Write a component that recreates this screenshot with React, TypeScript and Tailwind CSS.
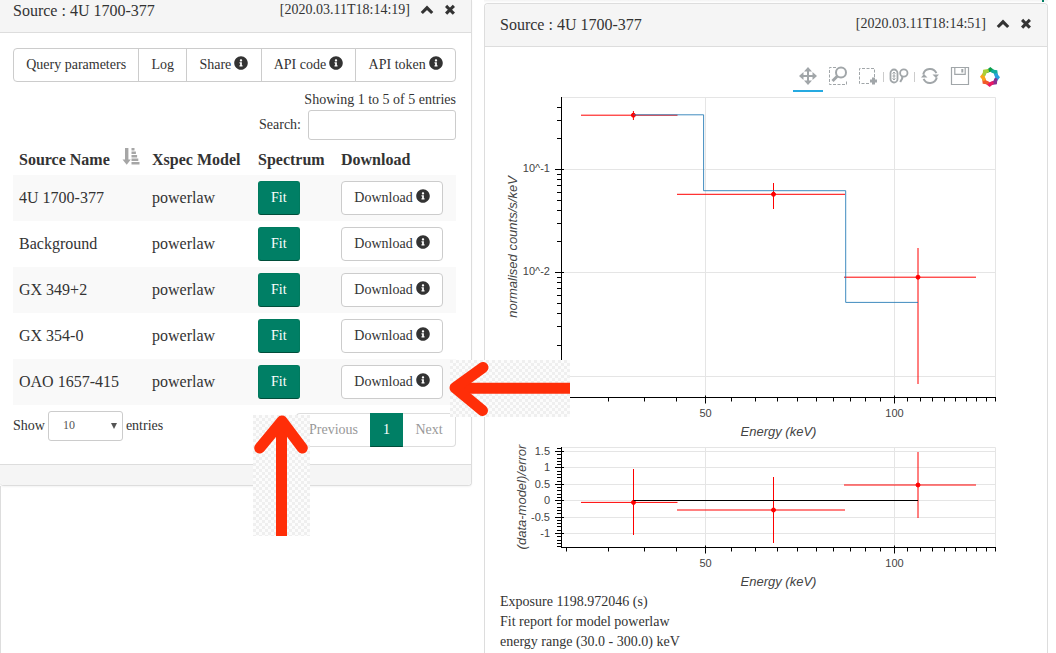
import React from 'react';
import { FaInfoCircle } from 'react-icons/fa';

const serif = "font-['Liberation_Serif',serif]";

function ChevronUp() {
  return (
    <svg className="h-3.5 w-3.5" viewBox="0 0 14 14" aria-hidden="true">
      <path d="M1.8 10 L7 4.8 L12.2 10" fill="none" stroke="#333" strokeWidth="3.1" />
    </svg>
  );
}

function Cross() {
  return (
    <svg className="h-3.5 w-3.5" viewBox="0 0 14 14" aria-hidden="true">
      <path d="M4.2 4 L9.8 9.6 M9.8 4 L4.2 9.6" fill="none" stroke="#333" strokeWidth="3.1" strokeLinecap="square" />
    </svg>
  );
}

function PanelHeader({ time, className }: { time: string; className: string }) {
  return (
    <header className={`flex justify-between border-b border-[#ddd] bg-[#f5f5f5] ${className}`}>
      <h2 className="text-base leading-[22px]">Source : 4U 1700-377</h2>
      <div className="flex h-5 items-center">
        <span className="text-sm leading-5">[{time}]</span>
        <button type="button" aria-label="Collapse" className="ml-2.5 flex">
          <ChevronUp />
        </button>
        <button type="button" aria-label="Close" className="ml-[9px] flex">
          <Cross />
        </button>
      </div>
    </header>
  );
}

const actions = [
  { label: 'Query parameters', info: false },
  { label: 'Log', info: false },
  { label: 'Share', info: true },
  { label: 'API code', info: true },
  { label: 'API token', info: true },
];

const sources = ['4U 1700-377', 'Background', 'GX 349+2', 'GX 354-0', 'OAO 1657-415'];

function Info() {
  return <FaInfoCircle className="mb-1 ml-[3px] h-3.5 w-3.5 shrink-0 text-[#333]" aria-hidden="true" />;
}

function SortIcon() {
  return (
    <svg className="h-[17px] w-[18px]" viewBox="0 0 18 17" fill="#a6a6a6" aria-hidden="true">
      <path d="M3 0h3.4v11.5h2.4L4.7 16.8 0.5 11.5H3z" />
      <path d="M9.5 0h3v2.6h-3zM9.5 3.5h4.4v2.6H9.5zM9.5 7h5.6v2.6H9.5zM9.5 10.5h6.8v2.6H9.5zM9.5 14h8v2.6h-8z" />
    </svg>
  );
}

function SourcesPanel() {
  return (
    <section className="rounded-b border-b border-r border-[#ddd] bg-white shadow-xs">
      <PanelHeader time="2020.03.11T18:14:19" className="h-[33px] pl-[13px] pr-3.5" />
      <div className="pb-[17px] pl-[13px] pr-[15px] pt-[15px]">
        <div className="flex">
          {actions.map((a) => (
            <button
              key={a.label}
              type="button"
              className="-ml-px flex h-[34px] flex-auto items-center justify-center whitespace-nowrap border border-[#ccc] bg-white px-3 text-sm leading-5 first:ml-0 first:rounded-l last:rounded-r"
            >
              {a.label}
              {a.info && <Info />}
            </button>
          ))}
        </div>
        <p className="mt-2 text-right text-sm leading-5">Showing 1 to 5 of 5 entries</p>
        <div className="flex items-center justify-end gap-[7px] text-sm">
          <label htmlFor="search">Search:</label>
          <input id="search" type="search" className="h-[30px] w-[148px] rounded-[3px] border border-[#ccc] bg-white px-2 outline-none" />
        </div>
        <table className="mt-1 w-full table-fixed border-collapse text-left text-base">
          <colgroup>
            <col className="w-[133px]" />
            <col className="w-[106px]" />
            <col className="w-[83px]" />
            <col />
          </colgroup>
          <thead>
            <tr className="h-[31px] whitespace-nowrap">
              <th className="px-1.5 font-bold">
                <span className="flex items-center justify-between">
                  Source Name
                  <span className="mb-1.5">
                    <SortIcon />
                  </span>
                </span>
              </th>
              <th className="px-1.5 font-bold">Xspec Model</th>
              <th className="px-1.5 font-bold">Spectrum</th>
              <th className="px-1.5 font-bold">Download</th>
            </tr>
          </thead>
          <tbody>
            {sources.map((s) => (
              <tr key={s} className="odd:bg-[#f9f9f9]">
                <td className="p-1.5">{s}</td>
                <td className="p-1.5">powerlaw</td>
                <td className="p-1.5">
                  <button type="button" className="block h-[34px] rounded-[3px] border border-[#007a5e] border-b-[#004d3a] bg-[#007f65] px-3 text-sm text-white">
                    Fit
                  </button>
                </td>
                <td className="p-1.5">
                  <button type="button" className="flex h-[34px] w-[102px] items-center justify-center rounded border border-[#ccc] bg-white text-sm">
                    Download
                    <Info />
                  </button>
                </td>
              </tr>
            ))}
          </tbody>
        </table>
        <div className="flex items-start justify-between pt-1.5 text-sm">
          <div className="flex items-center gap-[3px]">
            <label htmlFor="length">Show</label>
            <span className="relative">
              <select id="length" className="block h-[30px] w-[75px] appearance-none rounded-[3px] border border-[#ccc] bg-white pb-0.5 pl-3.5 text-xs text-[#555]">
                <option>10</option>
              </select>
              <svg className="pointer-events-none absolute right-1.5 top-3 h-1.5 w-1.5" viewBox="0 0 6 6" aria-hidden="true">
                <path d="M0 0h6L3 6z" fill="#555" />
              </svg>
            </span>
            <span>entries</span>
          </div>
          <nav className="mt-0.5 flex leading-5" aria-label="Pages">
            <button type="button" className="h-[34px] rounded-l border border-r-0 border-[#ddd] px-3 text-[#999]">Previous</button>
            <button type="button" className="h-[34px] border border-[#007f65] border-b-[#004d3a] bg-[#007f65] px-3 text-white">1</button>
            <button type="button" className="h-[34px] w-[53px] rounded-r border border-l-0 border-[#ddd] text-[#999]">Next</button>
          </nav>
        </div>
      </div>
      <footer className="h-[21px] rounded-b border-t border-[#ddd] bg-[#f5f5f5]" />
    </section>
  );
}

const range = (from: number, to: number) => Array.from({ length: to - from + 1 }, (_, i) => from + i);
const snap = (v: number) => Math.floor(v) + 0.5;
const energyX = (e: number) => snap(705.5 + 628 * Math.log10(e / 50));
const countY = (c: number) => snap(169.5 - 103.3 * Math.log10(c / 0.1));
const residualY = (r: number) => snap(500.7 - 32.8 * r);

const energies = range(6, 29).map((n) => n * 5);
const countTicks = [
  ...[2, 3, 4].map((n) => n * 0.1),
  ...range(2, 9).map((n) => n * 0.01),
  ...range(2, 9).map((n) => n * 0.001),
  ...range(7, 9).map((n) => n * 0.0001),
];

function EnergyAxis({ y }: { y: number }) {
  return (
    <g>
      <g stroke="#000">
        <path d={`M561 ${y}H996`} />
        {energies.map((e) => (
          <path key={e} d={`M${energyX(e)} ${e % 50 === 0 ? y - 2 : y}V${e % 50 === 0 ? y + 6 : y + 4}`} />
        ))}
      </g>
      <g fill="#444" textAnchor="middle">
        <text x="705.5" y={y + 19.5} fontSize="11">50</text>
        <text x="894.5" y={y + 19.5} fontSize="11">100</text>
        <text x="778.5" y={y + 38.5} fontSize="13" fontStyle="italic">Energy (keV)</text>
      </g>
    </g>
  );
}

type Point = { x: number; y: number; left: number; right: number; top: number; bottom: number };

const counts: Point[] = [
  { x: 633.4, y: 115.2, left: 581, right: 677.5, top: 111, bottom: 120 },
  { x: 773.5, y: 194.3, left: 677, right: 845, top: 183, bottom: 209 },
  { x: 918, y: 277.2, left: 844, right: 976, top: 248, bottom: 384 },
];

const residuals: Point[] = [
  { x: 633.5, y: 502.4, left: 581, right: 677.5, top: 469, bottom: 535 },
  { x: 773.5, y: 510, left: 677, right: 845, top: 477, bottom: 543 },
  { x: 918, y: 485, left: 844, right: 976, top: 452, bottom: 518 },
];

function Points({ data }: { data: Point[] }) {
  return (
    <g stroke="#f00">
      {data.map((p) => (
        <g key={p.x}>
          <path d={`M${p.left} ${p.y}H${p.right}M${p.x} ${p.top}V${p.bottom}`} />
          <circle cx={p.x} cy={p.y} r="2" fill="#f00" />
        </g>
      ))}
    </g>
  );
}

function Plots() {
  return (
    <svg
      className="block h-[500px] w-[505px] font-['Liberation_Sans',sans-serif]"
      viewBox="500 92 505 500"
      role="img"
      aria-label="Spectrum and residuals by energy"
      fill="none"
    >
      <g stroke="#e5e5e5">
        <path d="M561.5 97.5H995.5V397.5M561.5 447.5H995.5V547.5M705.5 98V397M894.5 98V397M705.5 448V547M894.5 448V547" />
        {[0.1, 0.01, 0.001].map((c) => (
          <path key={c} d={`M562 ${countY(c)}H995`} />
        ))}
        {[1.5, 1, 0.5, 0, -0.5, -1].map((r) => (
          <path key={r} d={`M562 ${residualY(r)}H995`} />
        ))}
      </g>
      <g stroke="#000">
        <path d="M561.5 97V398M561.5 447V548" />
        {countTicks.map((c) => (
          <path key={c} d={`M557 ${countY(c)}H561`} />
        ))}
        {[0.1, 0.01, 0.001].map((c) => (
          <path key={c} d={`M555 ${countY(c)}H564`} />
        ))}
        {range(-14, 16).map((n) => (
          <path key={n} d={n % 5 === 0 ? `M555 ${residualY(n / 10)}H564` : `M557 ${residualY(n / 10)}H561`} />
        ))}
      </g>
      <EnergyAxis y={397.5} />
      <EnergyAxis y={547.5} />
      <g fill="#444" fontSize="11" textAnchor="end">
        <text x="550" y="172">10^-1</text>
        <text x="550" y="275">10^-2</text>
        {[1.5, 1, 0.5, 0, -0.5, -1].map((r) => (
          <text key={r} x="550" y={residualY(r) + 3}>{r}</text>
        ))}
      </g>
      <g fill="#444" fontSize="13" fontStyle="italic" textAnchor="middle">
        <text transform="translate(517 247) rotate(-90)">normalised counts/s/keV</text>
        <text transform="translate(526 497) rotate(-90)">(data-model)/error</text>
      </g>
      <Points data={counts} />
      <path d="M633.5 114.8H703.6V190.7H845.7V302.4H918" stroke="#1f77b4" strokeOpacity="0.85" />
      <Points data={residuals} />
      <path d="M633.5 500.5H918" stroke="#000" />
    </svg>
  );
}

const logoColors = ['#0aa04b', '#12ad9e', '#2a9fe0', '#8a2f8f', '#ea1866', '#f0582a', '#f9a51a', '#a9cf38'];

function ToolButton({ label, active, children }: { label: string; active?: boolean; children: React.ReactNode }) {
  return (
    <button
      type="button"
      aria-label={label}
      className={`flex h-[30px] w-[30px] items-center justify-center border-b-2 ${active ? 'border-[#26aae1]' : 'border-transparent'}`}
    >
      <svg className="h-5 w-5" viewBox="0 0 20 20" fill="none" stroke="#a1a6a9" aria-hidden="true">
        {children}
      </svg>
    </button>
  );
}

function Toolbar() {
  return (
    <div className="flex w-[505px] items-center justify-end">
      <ToolButton label="Pan" active>
        <path d="M10 3v14M3 10h14" strokeWidth="2" />
        <path d="M10 1l4 4.5H6zM10 19l4-4.5H6zM1 10l4.5-4v8zM19 10l-4.5-4v8z" fill="#a1a6a9" stroke="none" />
      </ToolButton>
      <ToolButton label="Box zoom">
        <path d="M8 1.5H1.5v17h17V14" strokeDasharray="3 1.5" />
        <circle cx="13" cy="6.5" r="5" strokeWidth="2" />
        <path d="M9.5 10L4.5 15" strokeWidth="3" />
      </ToolButton>
      <ToolButton label="Box select">
        <path d="M16.5 11V2.5H1.5v15H11" strokeDasharray="3 1.5" />
        <path d="M15.5 11.5v7M12 15h7" strokeWidth="3" />
      </ToolButton>
      <span className="h-2.5 w-px bg-[#ccc]" />
      <ToolButton label="Wheel zoom">
        <rect x="1.5" y="3.5" width="7" height="13" rx="3.5" strokeWidth="1.8" />
        <path d="M5 6v8M3.5 10h3M3.5 7.5L5 6l1.5 1.5M3.5 12.5L5 14l1.5-1.5" />
        <circle cx="14.8" cy="7" r="3.7" strokeWidth="1.8" />
        <path d="M13.2 10v2.5l-2 3.5" strokeWidth="2" />
      </ToolButton>
      <span className="h-2.5 w-px bg-[#ccc]" />
      <ToolButton label="Reset">
        <path d="M3.2 8.5a7 7 0 0 1 13.2-1.3M16.8 11.5a7 7 0 0 1-13.2 1.3" strokeWidth="2" />
        <path d="M12.5 8.5H19L16 12zM1 11.5h6.5L4 8z" fill="#a1a6a9" stroke="none" />
      </ToolButton>
      <ToolButton label="Save">
        <path d="M1.5 1.5h17v17h-17z" strokeWidth="1.2" />
        <path d="M4.8 2v6.3h10.4V2" strokeWidth="1.2" />
        <path d="M12.3 3v3.5" strokeWidth="2" />
      </ToolButton>
      <a href="#bokeh" aria-label="Bokeh" className="flex w-[30px] justify-center">
        <svg className="h-5 w-5" viewBox="0 0 20 20" aria-hidden="true">
          {logoColors.map((c, i) => (
            <path key={c} d="M6 3.4L10.3 0L14.4 3.2L13 5.8L10.5 4.8L7 6z" fill={c} transform={`rotate(${i * 45} 10 10)`} />
          ))}
        </svg>
      </a>
    </div>
  );
}

function SpectrumPanel() {
  return (
    <section className="flex-1 rounded-t border border-b-0 border-[#ddd] bg-white">
      <PanelHeader time="2020.03.11T18:14:51" className="h-[43px] rounded-t pl-[15px] pr-3.5 pt-2.5" />
      <div className="pl-[15px] pt-[15px]">
        <Toolbar />
        <Plots />
        <div className="text-sm leading-5">
          <p>Exposure 1198.972046 (s)</p>
          <p>Fit report for model powerlaw</p>
          <p>energy range (30.0 - 300.0) keV</p>
        </div>
      </div>
    </section>
  );
}

function Checkers({ id }: { id: string }) {
  return (
    <>
      <defs>
        <pattern id={id} width="6" height="6" patternUnits="userSpaceOnUse">
          <path d="M0 0h6v6H0z" fill="#fcfcfc" />
          <path d="M0 0h3v3H0zM3 3h3v3H3z" fill="#efefef" />
        </pattern>
      </defs>
      <rect width="100%" height="100%" fill={`url(#${id})`} />
    </>
  );
}

export default function App() {
  return (
    <div className={`relative grid min-h-screen grid-cols-[472fr_564fr] gap-3 bg-white pr-2 text-[#333] ${serif}`}>
      <div className="flex flex-col">
        <SourcesPanel />
        <div className="flex-1 border-l border-[#ddd]" />
      </div>
      <div className="flex flex-col">
        <div className="flex h-[3px] justify-end bg-linear-to-b from-[#f3f3f3] to-white pr-1">
          <span className="h-0.5 w-0.5 bg-[#007f65]" />
        </div>
        <SpectrumPanel />
      </div>

      <svg className="absolute left-[450px] top-[360px] h-[57px] w-[120px] overflow-visible" viewBox="0 0 120 57" aria-hidden="true">
        <Checkers id="checks-left" />
        <path d="M5 28.3H120" stroke="#ff2e08" strokeWidth="11" />
        <path d="M33 7.5L5 27.8L32.5 50.5" fill="none" stroke="#ff2e08" strokeWidth="11" strokeLinecap="round" strokeLinejoin="round" />
      </svg>
      <svg className="absolute left-[253px] top-[415px] h-[121px] w-[57px] overflow-visible" viewBox="0 0 57 121" aria-hidden="true">
        <Checkers id="checks-up" />
        <path d="M28.5 6V121" stroke="#ff2e08" strokeWidth="11" />
        <path d="M6.7 33L29 6L49.3 33" fill="none" stroke="#ff2e08" strokeWidth="11" strokeLinecap="round" strokeLinejoin="round" />
      </svg>
    </div>
  );
}
